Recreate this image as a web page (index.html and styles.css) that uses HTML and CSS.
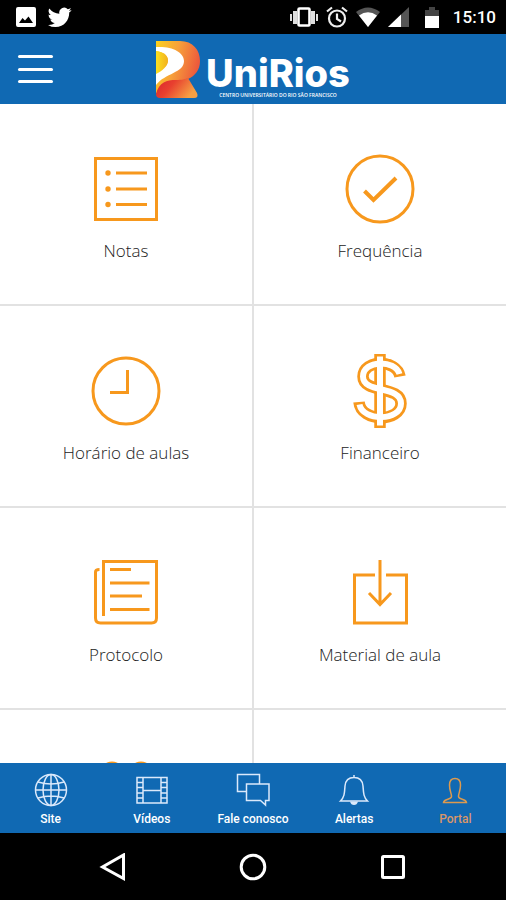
FILE: index.html
```html
<!DOCTYPE html>
<html lang="pt-BR">
<head>
<meta charset="utf-8">
<meta name="viewport" content="width=device-width, initial-scale=1">
<title>UniRios</title>
<link rel="stylesheet" href="styles.css">
</head>
<body>
<div class="status">
  <div class="status-group status-left">
    <svg width="20" height="20" viewBox="0 0 20 20"><path fill="#fff" fill-rule="evenodd" d="M2 0H18Q20 0 20 2V18Q20 20 18 20H2Q0 20 0 18V2Q0 0 2 0ZM3 16H17L12.500 9.500L9 13.500L6.500 11Z"/></svg>
    <svg width="24" height="24" viewBox="0 0 24 24"><path fill="#fff" d="M23.600 4.900a10 10 0 0 1-2.800.8 4.900 4.900 0 0 0 2.100-2.700 9.700 9.700 0 0 1-3.100 1.200 4.900 4.900 0 0 0-8.400 4.500A13.900 13.900 0 0 1 1.300 3.500a4.900 4.900 0 0 0 1.500 6.600 4.900 4.900 0 0 1-2.200-.6 4.900 4.900 0 0 0 3.900 4.900 5 5 0 0 1-2.200.1 4.900 4.900 0 0 0 4.600 3.400A9.900 9.900 0 0 1 0 19.900a13.900 13.900 0 0 0 7.500 2.200c9.100 0 14-7.500 13.700-14.600a10 10 0 0 0 2.400-2.600z"/></svg>
  </div>
  <div class="status-group status-right">
    <svg width="28" height="20" viewBox="0 0 28 20"><path fill="#ddd" d="M0 7h2v7H0zM3 4h4v13H3zM26 7h2v7h-2zM21 4h4v13h-4z"/><rect x="8.500" y="1.500" width="11" height="17" rx="1" fill="#000" stroke="#fff" stroke-width="2.600"/></svg>
    <svg width="22" height="22" viewBox="0 0 22 22" fill="none" stroke="#eee" stroke-width="2.200"><circle cx="11" cy="12.500" r="8"/><path d="M1 5.500L6 1.500M16 1.500L21 5.500M11 7.500V13L15 15.500"/></svg>
    <svg width="24" height="20" viewBox="0 0 24 20"><path fill="#555" d="M0 5Q12-4 24 5L12 20Z"/><path fill="#fff" d="M3 8.500Q12 2 21 8.500L12 20Z"/></svg>
    <svg width="21" height="20" viewBox="0 0 21 20"><path fill="#555" d="M0 20L21 0V20Z"/><path fill="#fff" d="M0 20L13 7.600V20Z"/></svg>
    <svg class="battery" width="14" height="21" viewBox="0 0 14 21"><path fill="#444" d="M0 3H4V0H10V3H14V10H0Z"/><path fill="#fff" d="M0 9H14V21H0Z"/></svg>
    <span class="clock">15:10</span>
  </div>
</div>

<header class="header">
  <button class="menu" aria-label="Menu"><span></span><span></span><span></span></button>
  <div class="brand">
    <svg class="mark" width="44" height="58" viewBox="0 0 44 58">
      <defs>
        <linearGradient id="g1" x1="0" y1="0" x2="1" y2="0.300"><stop offset="0" stop-color="#fcd21c"/><stop offset="0.500" stop-color="#f7a03a"/><stop offset="1" stop-color="#ec5a3c"/></linearGradient>
        <linearGradient id="g2" x1="0" y1="0" x2="1" y2="0.400"><stop offset="0" stop-color="#d9232e"/><stop offset="0.450" stop-color="#e8402f"/><stop offset="1" stop-color="#f6a044"/></linearGradient>
        <linearGradient id="g3" x1="0" y1="0" x2="1" y2="0"><stop offset="0" stop-color="#fbe11f"/><stop offset="1" stop-color="#f2b01f"/></linearGradient>
      </defs>
      <path fill="url(#g1)" d="M0 1H24C37 1 44 10 44 21C44 30 39 36 32 39C22 42 8 41 0 54Z"/>
      <path fill="#fff" d="M0 7C16 6 28 12 28 21C28 33 9 33 0 45V32C8 29 12 25 12 20C12 15 7 12 0 11Z"/>
      <path fill="url(#g3)" d="M0 11C8 12 12 16 12 21C12 26 6 31 0 34Z"/>
      <path fill="url(#g2)" d="M0 54C3 42 11 40 20 40C26 40 29 39 32 38L41 53Q43 58 38 58H4Q0 58 0 54Z"/>
    </svg>
    <div class="wordmark">
      <span class="name">UniRios</span>
      <span class="tagline">CENTRO UNIVERSITÁRIO DO RIO SÃO FRANCISCO</span>
    </div>
  </div>
</header>

<main class="content">
  <nav class="grid" aria-label="Portal">
    <a class="cell" href="#notas">
      <svg class="icon" viewBox="0 0 70 70"><rect x="4.500" y="4.500" width="61" height="61"/><path d="M25 19H56M25 35H56M25 50.500H56"/><g class="solid"><circle cx="17" cy="19" r="2.700"/><circle cx="17" cy="35" r="2.700"/><circle cx="17" cy="50.500" r="2.700"/></g></svg>
      <span>Notas</span>
    </a>
    <a class="cell" href="#frequencia">
      <svg class="icon" viewBox="0 0 70 70"><circle cx="35" cy="35" r="33"/><path stroke-width="4" d="M19.500 37L28.500 46L51 24"/></svg>
      <span>Frequência</span>
    </a>
    <a class="cell" href="#horario">
      <svg class="icon" viewBox="0 0 70 70"><circle cx="35" cy="35" r="33"/><path d="M36.500 14V36.500H19"/></svg>
      <span>Horário de aulas</span>
    </a>
    <a class="cell" href="#financeiro">
      <svg class="icon" viewBox="0 0 70 70">
        <g stroke-width="11.500"><path d="M35-2V72"/><path d="M55 20.500C52 3 18 3 18 20.500C18 38 56 29 56 47.500C56 66 16 67 14 46"/></g>
        <g class="hollow"><path d="M35 0.500V69.500"/><path d="M54.500 18C50 3 18 4 18 20.500C18 38 56 29 56 47.500C56 65 18 66 14.500 48.500"/></g>
      </svg>
      <span>Financeiro</span>
    </a>
    <a class="cell" href="#protocolo">
      <svg class="icon" viewBox="0 0 70 70"><path d="M12.500 58V3.500H65.500V60Q65.500 65 60.500 65H9.500Q4.500 65 4.500 60V14Q4.500 11.500 8.500 11.500"/><path d="M19 11.500H40M19 25H58.500M19 38H51M19 51.500H58.500"/></svg>
      <span>Protocolo</span>
    </a>
    <a class="cell" href="#material">
      <svg class="icon" viewBox="0 0 70 70"><path d="M30 17H9.500V65H61.500V17H41"/><path d="M35 2V47M24 35L35 46.500L46 35"/></svg>
      <span>Material de aula</span>
    </a>
    <a class="cell" href="#turma" aria-label="Turma">
      <svg class="icon" viewBox="0 0 70 70"><circle cx="21" cy="14" r="11"/><circle cx="50" cy="14" r="11"/></svg>
    </a>
    <a class="cell" href="#outros" aria-label="Outros"></a>
  </nav>
</main>

<nav class="tabs" aria-label="Principal">
  <a class="tab" href="#site">
    <svg viewBox="0 0 34 34"><circle cx="17" cy="17" r="15.500"/><ellipse cx="17" cy="17" rx="8" ry="15.500"/><path d="M17 1.500V32.500M1.500 17H32.500M4 9Q17 13 30 9M4 25Q17 21 30 25"/></svg>
    <span>Site</span>
  </a>
  <a class="tab" href="#videos">
    <svg viewBox="0 0 34 34"><path d="M2 4.500H32V30H2ZM8 4.500V30M26 4.500V30M8 17.500H26M2 9.500H8M2 14.500H8M2 20H8M2 25H8M26 9.500H32M26 14.500H32M26 20H32M26 25H32"/></svg>
    <span>Vídeos</span>
  </a>
  <a class="tab" href="#conosco">
    <svg viewBox="0 0 34 34"><path d="M10.500 18.500H1.500V1.500H23.500V11M10.500 11H33V27.500H29.500V32L24.500 27.500H10.500Z"/></svg>
    <span>Fale conosco</span>
  </a>
  <a class="tab" href="#alertas">
    <svg viewBox="0 0 34 34"><path d="M3.500 28C7.500 24 7.500 20 8 13C8.500 7 12 4.500 17 4.500S25.500 7 26 13C26.500 20 26.500 24 30.500 28ZM17 2V4.500"/><path class="fill" d="M13 28.500H21Q20 32 17 32T13 28.500Z"/></svg>
    <span>Alertas</span>
  </a>
  <a class="tab active" href="#portal" aria-current="page">
    <svg viewBox="0 0 34 34"><path d="M5.500 29.500C6 25.500 13.500 27 13.500 23.500C13.500 20 11.500 18 11.500 12C11.500 7.500 13.500 5.500 17 5.500S22.500 7.500 22.500 12C22.500 18 20.500 20 20.500 23.500C20.500 27 28 25.500 28.500 29.500Z"/></svg>
    <span>Portal</span>
  </a>
</nav>

<div class="system">
  <button aria-label="Voltar"><svg viewBox="0 0 28 28"><path d="M24.500 2V25.500L3.500 14Z"/></svg></button>
  <button aria-label="Início"><svg viewBox="0 0 28 28"><circle cx="14" cy="14" r="11.800"/></svg></button>
  <button aria-label="Recentes"><svg viewBox="0 0 28 28"><rect x="3.500" y="3.500" width="21" height="21" rx="1"/></svg></button>
</div>
</body>
</html>
```

FILE: styles.css
```css
* { box-sizing: border-box; }
body {
  margin: 0;
  height: 100vh;
  display: flex;
  flex-direction: column;
  background: #fff;
  font-family: "Open Sans", "Noto Sans", sans-serif;
}
a { text-decoration: none; color: inherit; }
button { border: 0; padding: 0; background: none; }
svg { display: block; flex: none; }

.status {
  display: flex;
  justify-content: space-between;
  align-items: center;
  height: 34px;
  flex: none;
  padding: 0 10px 0 16px;
  background: #000;
}
.status-group { display: flex; align-items: center; }
.status-left { gap: 12px; }
.status-right { gap: 8px; }
.battery { margin: 0 6px 0 8px; }
.clock { color: #fff; font: 500 17px/20px Roboto, sans-serif; }

.header {
  display: grid;
  grid-template-columns: 1fr auto 1fr;
  align-items: center;
  height: 70px;
  flex: none;
  padding: 0 18px;
  background: #1069b3;
}
.menu {
  display: flex;
  flex-direction: column;
  justify-content: space-between;
  width: 35px;
  height: 28px;
}
.menu span { height: 3px; border-radius: 2px; background: #fff; }
.brand { display: flex; align-items: center; gap: 6px; }
.wordmark { display: flex; flex-direction: column; align-items: center; padding-top: 14px; color: #fff; }
.name { font: 800 38px/38px Inter, sans-serif; }
.tagline { font: 600 5px/6px "Open Sans", sans-serif; white-space: nowrap; }

.content { flex: 1; min-height: 0; overflow: hidden auto; scrollbar-width: none; }
.grid {
  display: grid;
  grid-template-columns: 1fr 1fr;
  gap: 2px;
  background: #e2e2e2;
}
.cell {
  display: flex;
  flex-direction: column;
  align-items: center;
  gap: 14px;
  min-height: 200px;
  padding: 50px 8px 40px;
  background: #fff;
  color: #222;
  font-weight: 300;
  font-size: 17px;
  line-height: 26px;
}
.icon {
  width: 70px;
  height: 70px;
  overflow: visible;
  fill: none;
  stroke: #f7981d;
  stroke-width: 3;
}
.solid { fill: #f7981d; stroke: none; }
.hollow { stroke: #fff; stroke-width: 6; }

.tabs {
  display: grid;
  grid-template-columns: repeat(5, 1fr);
  height: 70px;
  flex: none;
  background: #1069b3;
}
.tab {
  display: flex;
  flex-direction: column;
  align-items: center;
  gap: 4px;
  padding-top: 10px;
  color: #fff;
  font: 500 12px/16px Roboto, sans-serif;
}
.tab svg { width: 34px; height: 34px; fill: none; stroke: #dbe9fb; stroke-width: 1.5px; }
.tab .fill { fill: #dbe9fb; stroke: none; }
.active { color: #d9966a; }
.active svg { stroke: #dd9a4e; }

.system {
  display: flex;
  justify-content: center;
  align-items: center;
  gap: 112px;
  height: 67px;
  flex: none;
  background: #000;
}
.system svg { width: 28px; height: 28px; fill: none; stroke: #fff; stroke-width: 3px; }
```
